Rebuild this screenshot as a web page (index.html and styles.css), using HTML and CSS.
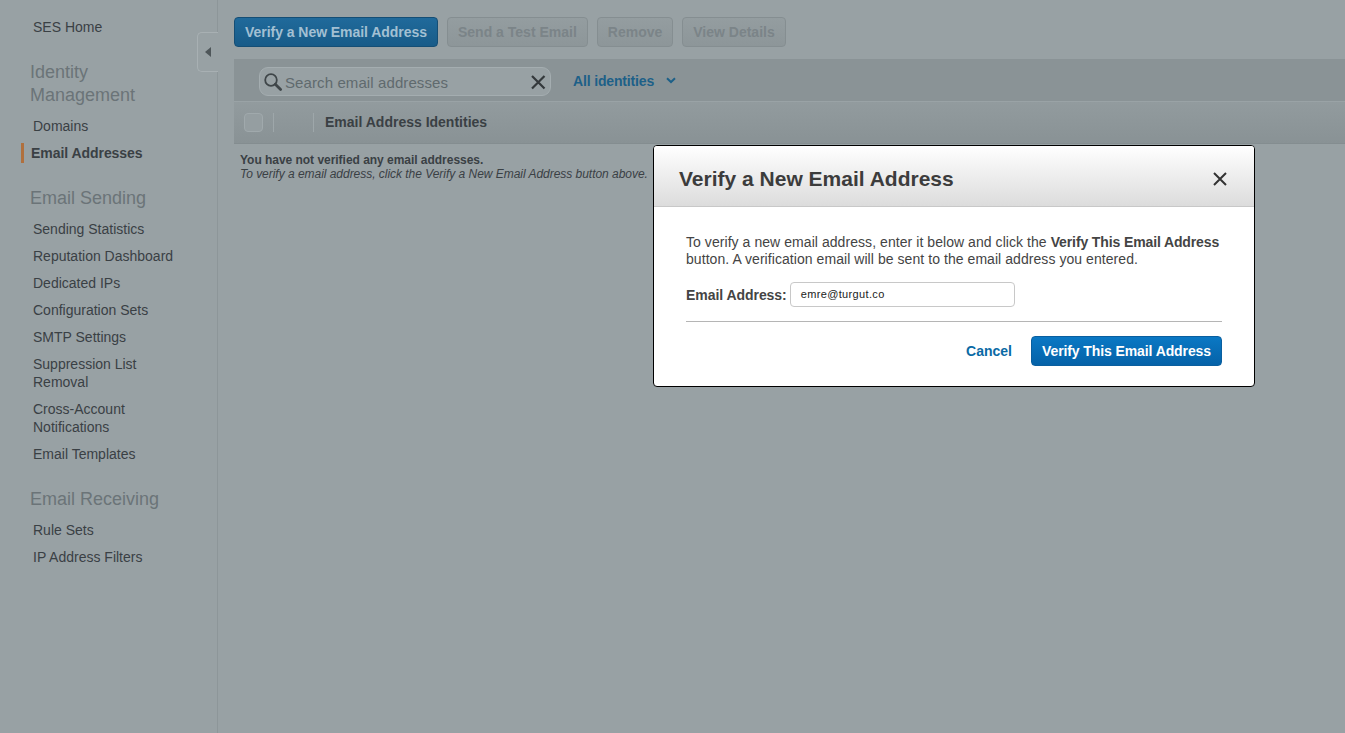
FILE: index.html
```html
<!DOCTYPE html>
<html lang="en">
<head>
<meta charset="utf-8">
<title>Verify a New Email Address</title>
<link rel="stylesheet" href="styles.css">
</head>
<body>
<div class="app">
  <aside class="sidebar">
    <a class="nav-item home">SES Home</a>
    <h2 class="nav-title">Identity Management</h2>
    <a class="nav-item">Domains</a>
    <a class="nav-item active">Email Addresses</a>
    <h2 class="nav-title">Email Sending</h2>
    <a class="nav-item">Sending Statistics</a>
    <a class="nav-item">Reputation Dashboard</a>
    <a class="nav-item">Dedicated IPs</a>
    <a class="nav-item">Configuration Sets</a>
    <a class="nav-item">SMTP Settings</a>
    <a class="nav-item">Suppression List Removal</a>
    <a class="nav-item">Cross-Account Notifications</a>
    <a class="nav-item">Email Templates</a>
    <h2 class="nav-title">Email Receiving</h2>
    <a class="nav-item">Rule Sets</a>
    <a class="nav-item">IP Address Filters</a>
    <div class="collapse-tab"><span class="collapse-arrow"></span></div>
  </aside>
  <main class="main">
    <div class="actions">
      <button class="btn btn-primary">Verify a New Email Address</button>
      <button class="btn btn-off">Send a Test Email</button>
      <button class="btn btn-off">Remove</button>
      <button class="btn btn-off">View Details</button>
    </div>
    <div class="filter-bar">
      <div class="search">
        <svg class="search-icon" width="20" height="20" viewBox="0 0 20 20"><circle cx="8" cy="8" r="5.8" fill="none" stroke="#3f4649" stroke-width="1.8"/><path d="M12.3 12.3L17.6 17.6" stroke="#3f4649" stroke-width="2.8" stroke-linecap="round"/></svg>
        <span class="search-text">Search email addresses</span>
        <svg class="search-clear" width="16" height="16" viewBox="0 0 16 16"><path d="M2 2L14.5 14.5M14.5 2L2 14.5" stroke="#34393c" stroke-width="2.2"/></svg>
      </div>
      <a class="filter-link">All identities</a>
      <svg class="filter-caret" width="10" height="7" viewBox="0 0 10 7"><path d="M1 1.2L5 5L9 1.2" fill="none" stroke="#1d6088" stroke-width="2"/></svg>
    </div>
    <div class="table-head">
      <span class="checkbox"></span>
      <span class="sep sep-a"></span>
      <span class="sep sep-b"></span>
      <span class="col-title">Email Address Identities</span>
    </div>
    <div class="empty">
      <strong class="empty-title">You have not verified any email addresses.</strong>
      <em class="empty-hint">To verify a email address, click the Verify a New Email Address button above.</em>
    </div>
  </main>
</div>
<section class="modal">
  <header class="modal-head">
    <h1 class="modal-title">Verify a New Email Address</h1>
    <svg class="modal-close" width="14" height="14" viewBox="0 0 14 14"><path d="M1 1L13 13M13 1L1 13" stroke="#333" stroke-width="2"/></svg>
  </header>
  <div class="modal-body">
    <p class="modal-text">To verify a new email address, enter it below and click the <b class="modal-strong">Verify This Email Address</b> button. A verification email will be sent to the email address you entered.</p>
    <div class="field">
      <label class="field-label">Email Address:</label>
      <div class="field-input">emre@turgut.co</div>
    </div>
    <div class="modal-foot">
      <a class="cancel">Cancel</a>
      <button class="btn btn-confirm">Verify This Email Address</button>
    </div>
  </div>
</section>
</body>
</html>
```
FILE: styles.css
```css
* { box-sizing: border-box; }
html, body { margin: 0; height: 733px; overflow: hidden; }
body {
  background: #98a1a4;
  font-family: "Liberation Sans", Arial, sans-serif;
  color: #3a4044;
}
.app { display: flex; height: 733px; }

.sidebar {
  position: relative;
  flex: 0 0 218px;
  border-right: 1px solid #8d9699;
  padding: 18px 30px 0 33px;
  display: flex;
  flex-direction: column;
  align-items: flex-start;
}
.nav-item {
  display: block;
  font-size: 14px;
  line-height: 18px;
  margin-bottom: 9px;
  color: #3a4044;
}
.nav-item.home { margin-bottom: 0; }
.nav-item.active {
  font-weight: bold;
  margin: -1px 0 8px -12px;
  padding: 1px 0 1px 7px;
  border-left: 3px solid #b0703e;
  letter-spacing: -0.05px;
}
.nav-title {
  margin: 16px 0 10px -3px;
  font-size: 18px;
  line-height: 23px;
  font-weight: normal;
  color: #6b7478;
  width: 150px;
}
.nav-item.home + .nav-title { margin-top: 25px; }
.collapse-tab {
  position: absolute;
  left: 197px;
  top: 32px;
  width: 21px;
  height: 40px;
  border: 1px solid #a8b0b3;
  border-right: 0;
  border-radius: 5px 0 0 5px;
  display: flex;
  align-items: center;
  justify-content: center;
  background: #98a1a4;
}
.collapse-arrow {
  width: 0;
  height: 0;
  border-style: solid;
  border-width: 5.5px 6px 5.5px 0;
  border-color: transparent #4f575a transparent transparent;
}

.main { flex: 1; min-width: 0; padding: 17px 0 0 16px; }
.actions { display: flex; gap: 9px; margin-bottom: 12px; }
.btn {
  height: 30px;
  padding: 0 10px;
  border-radius: 4px;
  font: bold 14px/28px "Liberation Sans", Arial, sans-serif;
  white-space: nowrap;
}
.btn-primary {
  width: 204px;
  color: #a3c0d3;
  background: linear-gradient(#206a9b, #185b88);
  border: 1px solid #154e75;
  letter-spacing: -0.05px;
}
.btn-off {
  color: #7b8488;
  background: linear-gradient(#949da0, #8d9699);
  border: 1px solid #858e91;
}
.filter-bar {
  display: flex;
  align-items: center;
  height: 43px;
  background: #8a9396;
  border-bottom: 1px solid #9aa3a6;
  padding-left: 25px;
}
.search {
  width: 292px;
  height: 29px;
  border: 1px solid #a4adb0;
  border-radius: 9px;
  background: #98a1a4;
  display: flex;
  align-items: center;
  padding: 2px 0 0 3px;
  position: relative;
  top: 1px;
}
.search-icon { flex: none; margin-right: 2px; }
.search-text { flex: 1; font-size: 15px; letter-spacing: 0.1px; color: #606a6e; padding-top: 1px; }
.search-clear { flex: none; margin-right: 4px; }
.filter-link {
  margin-left: 22px;
  padding-top: 2px;
  font-size: 14px;
  font-weight: bold;
  letter-spacing: -0.15px;
  color: #1d6088;
}
.filter-caret { margin-left: 12px; margin-top: 1px; }
.table-head {
  display: flex;
  align-items: center;
  height: 42px;
  background: linear-gradient(#929b9e, #899295);
  border-bottom: 1px solid #848d90;
  padding-left: 10px;
}
.checkbox {
  width: 19px;
  height: 19px;
  border: 1px solid #a0a9ac;
  border-radius: 4px;
  background: #959ea1;
}
.sep { width: 1px; height: 19px; background: #9ea7aa; }
.sep-a { margin-left: 10px; }
.sep-b { margin-left: 39px; }
.col-title { margin-left: 11px; padding-bottom: 2px; font-size: 14px; font-weight: bold; color: #3a4044; }
.empty { padding: 9px 0 0 6px; font-size: 12px; line-height: 14px; color: #3a4044; letter-spacing: -0.03px; }
.empty-title, .empty-hint { display: block; }

.modal {
  position: absolute;
  left: 653px;
  top: 145px;
  width: 602px;
  height: 242px;
  background: #fff;
  border: 1px solid #000;
  border-radius: 4px;
  overflow: hidden;
}
.modal-head {
  height: 61px;
  padding: 5px 27px 0 25px;
  display: flex;
  align-items: center;
  justify-content: space-between;
  background: linear-gradient(#fff, #dcdcdc);
  border-bottom: 1px solid #c8c8c8;
}
.modal-title { margin: 0; font-size: 21px; font-weight: bold; color: #3c3c3c; }
.modal-body { padding: 27px 32px 0; }
.modal-text { margin: 0; font-size: 14px; line-height: 17px; color: #444; letter-spacing: 0.06px; }
.modal-strong { letter-spacing: -0.12px; }
.field {
  display: flex;
  align-items: center;
  gap: 3px;
  margin-top: 14px;
  padding-bottom: 14px;
  border-bottom: 1px solid #b5b5b5;
}
.field-label { font-size: 14px; font-weight: bold; color: #444; letter-spacing: -0.05px; }
.field-input {
  width: 225px;
  height: 25px;
  border: 1px solid #c8c8c8;
  border-radius: 4px;
  padding-left: 10px;
  font-size: 11px;
  line-height: 23px;
  letter-spacing: 0.35px;
  color: #222;
}
.modal-foot {
  display: flex;
  align-items: center;
  justify-content: flex-end;
  gap: 19px;
  margin-top: 14px;
}
.cancel { font-size: 14px; font-weight: bold; color: #0a6aa5; }
.btn-confirm {
  width: 191px;
  padding: 0;
  color: #fff;
  background: linear-gradient(#0a78c4, #0562a8);
  border: 1px solid #0a5f9f;
  letter-spacing: -0.1px;
}
```
